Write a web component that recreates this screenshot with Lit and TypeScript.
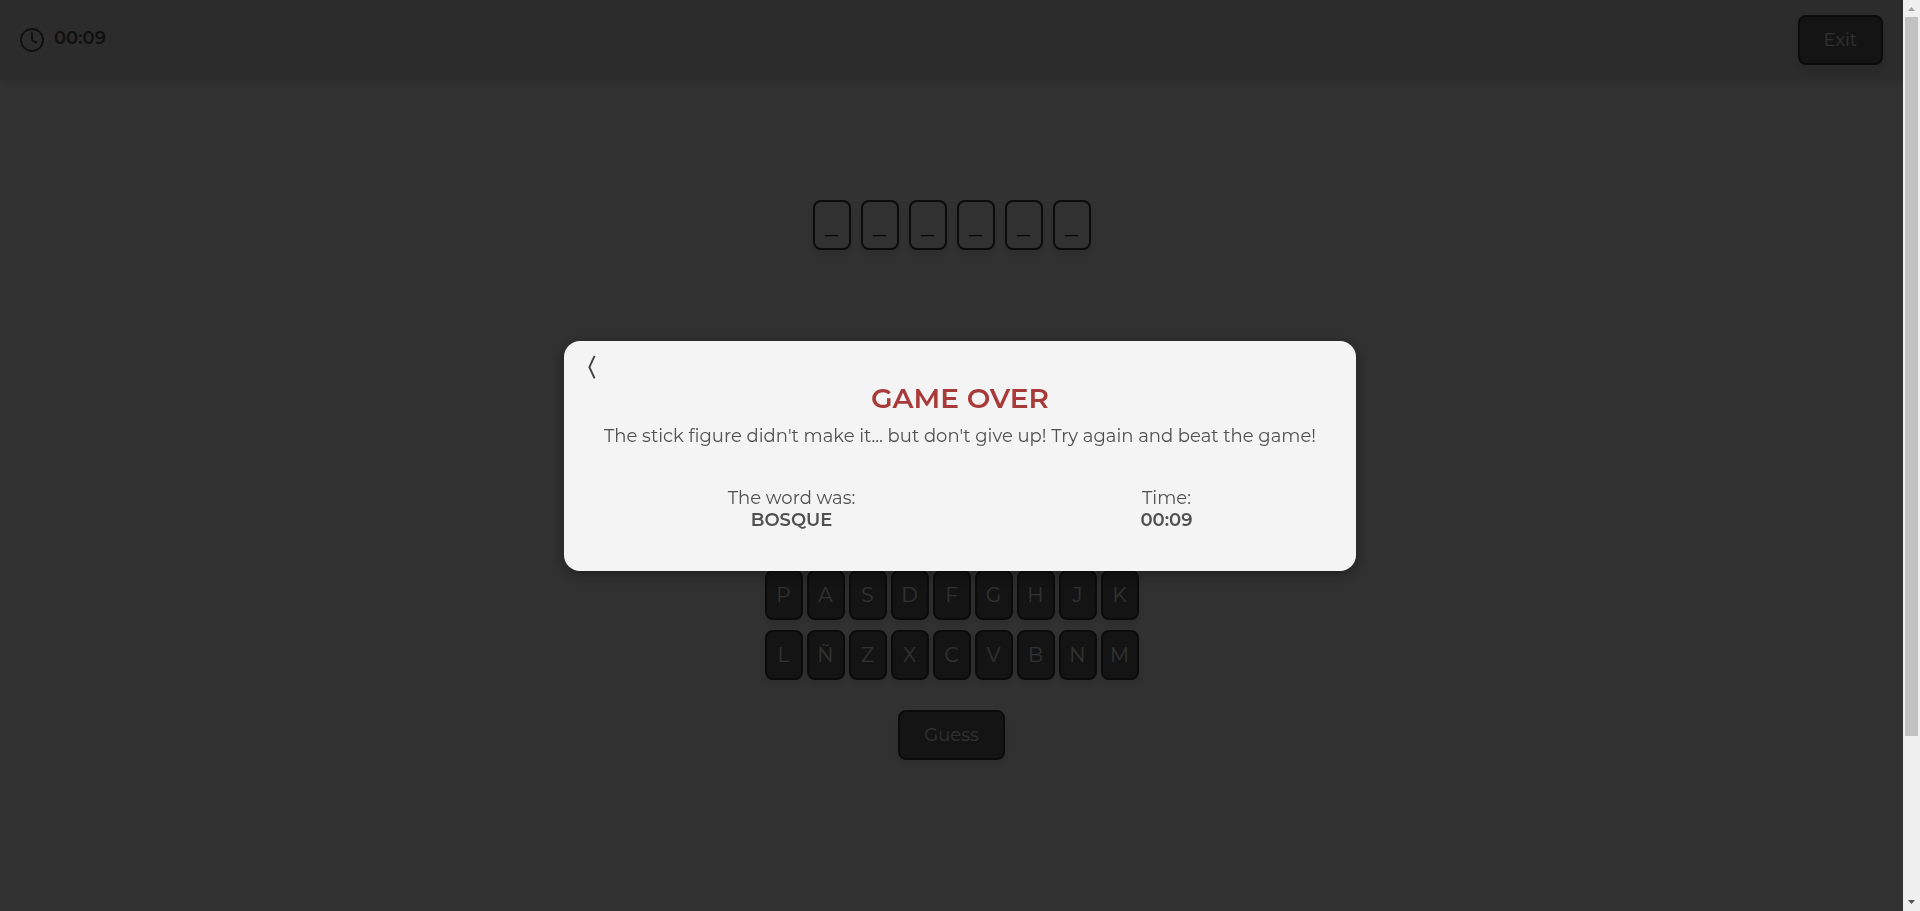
import { LitElement, html, css } from "lit";
import { customElement, property } from "lit/decorators.js";

const KEY_ROWS = ["PASDFGHJK", "LÑZXCVBNM"];

@customElement("game-over-dialog")
class GameOverDialog extends LitElement {
  @property() word = "";
  @property() time = "";

  static styles = css`
    :host {
      position: fixed;
      inset: 0;
      display: flex;
      align-items: center;
      justify-content: center;
      background: rgba(0, 0, 0, 0.8);
    }
    .dialog {
      position: relative;
      box-sizing: border-box;
      width: 792px;
      max-width: 90%;
      padding: 40px 0;
      border-radius: 16px;
      background: #f4f4f4;
      color: #505050;
      box-shadow: 0 4px 16px rgba(0, 0, 0, 0.4);
      text-align: center;
      font-size: 18px;
      line-height: 22px;
    }
    .back {
      position: absolute;
      top: 12px;
      left: 20px;
      display: flex;
      padding: 2px 4px;
      border: 0;
      background: none;
      color: #404040;
      cursor: pointer;
    }
    .title {
      margin: 0 0 10px;
      color: #a83a3a;
      font-size: 28px;
      font-weight: 600;
      line-height: 34px;
    }
    .message {
      margin: 0;
    }
    .facts {
      display: grid;
      grid-template-columns: 1fr 1fr;
      margin: 40px 0 0;
      padding: 0 2px 0 40px;
    }
    dd {
      margin: 0;
      font-weight: 600;
    }
  `;

  render() {
    return html`
      <section class="dialog" role="dialog" aria-labelledby="title">
        <button class="back" aria-label="Back">
          <svg width="8" height="24" viewBox="0 0 8 24" fill="none" stroke="currentColor" stroke-width="1.9">
            <path d="M6.600 .8 1.400 12.2 6.600 23.4" />
          </svg>
        </button>
        <h1 class="title" id="title">GAME OVER</h1>
        <p class="message">The stick figure didn't make it... but don't give up! Try again and beat the game!</p>
        <dl class="facts">
          <div><dt>The word was:</dt><dd>${this.word}</dd></div>
          <div><dt>Time:</dt><dd>${this.time}</dd></div>
        </dl>
      </section>
    `;
  }
}

@customElement("app-root")
class AppRoot extends LitElement {
  @property() word = "BOSQUE";
  @property() time = "00:09";

  static styles = css`
    :host {
      display: flex;
      height: 100vh;
      overflow: hidden;
      background: #f5f5f5;
      color: #3c3c3c;
      font-family: Montserrat, Inter, "Liberation Sans", sans-serif;
      font-size: 18px;
    }
    .page {
      flex: 1;
      min-width: 0;
    }
    .top {
      display: flex;
      align-items: center;
      justify-content: space-between;
      padding: 15px 20px;
      background: #dadada;
      box-shadow: 0 2px 10px rgba(0, 0, 0, 0.12);
    }
    .clock {
      display: flex;
      align-items: center;
      gap: 10px;
      color: #505050;
      font-weight: 600;
      line-height: 22px;
    }
    .clock time {
      padding-bottom: 4px;
    }
    .btn,
    .key {
      height: 50px;
      border: 2px solid #383838;
      border-radius: 8px;
      background: #646464;
      color: #f5f5f5;
      box-shadow: 0 4px 8px rgba(0, 0, 0, 0.12);
      font-family: inherit;
      cursor: pointer;
    }
    .btn {
      padding: 0 24px;
      font-size: 18px;
    }
    .key {
      width: 38px;
      padding: 0;
      font-size: 20px;
    }
    .board {
      display: flex;
      flex-direction: column;
      align-items: center;
      padding-top: 120px;
    }
    .word {
      display: flex;
      gap: 10px;
      margin-bottom: 320px;
    }
    .slot {
      box-sizing: border-box;
      width: 38px;
      height: 50px;
      border: 2px solid #383838;
      border-radius: 8px;
      box-shadow: 0 4px 8px rgba(0, 0, 0, 0.12);
      color: #202020;
      text-align: center;
      font-size: 26px;
      line-height: 48px;
    }
    .keys {
      display: grid;
      gap: 10px;
      margin-bottom: 30px;
    }
    .row {
      display: flex;
      gap: 4px;
    }
    .scroll {
      position: relative;
      z-index: 1;
      display: flex;
      flex-direction: column;
      align-items: center;
      width: 17px;
      background: #f0f0f0;
    }
    .arrow {
      flex: none;
      display: block;
    }
    .track {
      flex: 1;
      width: 13px;
    }
    .thumb {
      height: 82%;
      background: #c1c1c1;
    }
  `;

  render() {
    return html`
      <div class="page">
        <header class="top">
          <div class="clock">
            <svg width="24" height="24" viewBox="0 0 24 24" fill="none" stroke="currentColor" stroke-width="1.8" stroke-linecap="round" stroke-linejoin="round">
              <circle cx="12" cy="12" r="11" />
              <path d="M12 5v7l4.400 2.600" stroke-width="2" />
            </svg>
            <time>${this.time}</time>
          </div>
          <button class="btn">Exit</button>
        </header>
        <main class="board">
          <div class="word">${[...this.word].map(() => html`<span class="slot">_</span>`)}</div>
          <div class="keys">
            ${KEY_ROWS.map(
              (row) => html`<div class="row">${[...row].map((k) => html`<button class="key">${k}</button>`)}</div>`
            )}
          </div>
          <button class="btn">Guess</button>
        </main>
      </div>
      <game-over-dialog .word=${this.word} .time=${this.time}></game-over-dialog>
      <div class="scroll" aria-hidden="true">
        <svg class="arrow" width="17" height="17" viewBox="0 0 17 17" fill="#a3a3a3"><path d="M5 11h7L8.500 7z" /></svg>
        <div class="track"><div class="thumb"></div></div>
        <svg class="arrow" width="17" height="17" viewBox="0 0 17 17" fill="#505050"><path d="M5 6h7L8.500 10z" /></svg>
      </div>
    `;
  }
}
